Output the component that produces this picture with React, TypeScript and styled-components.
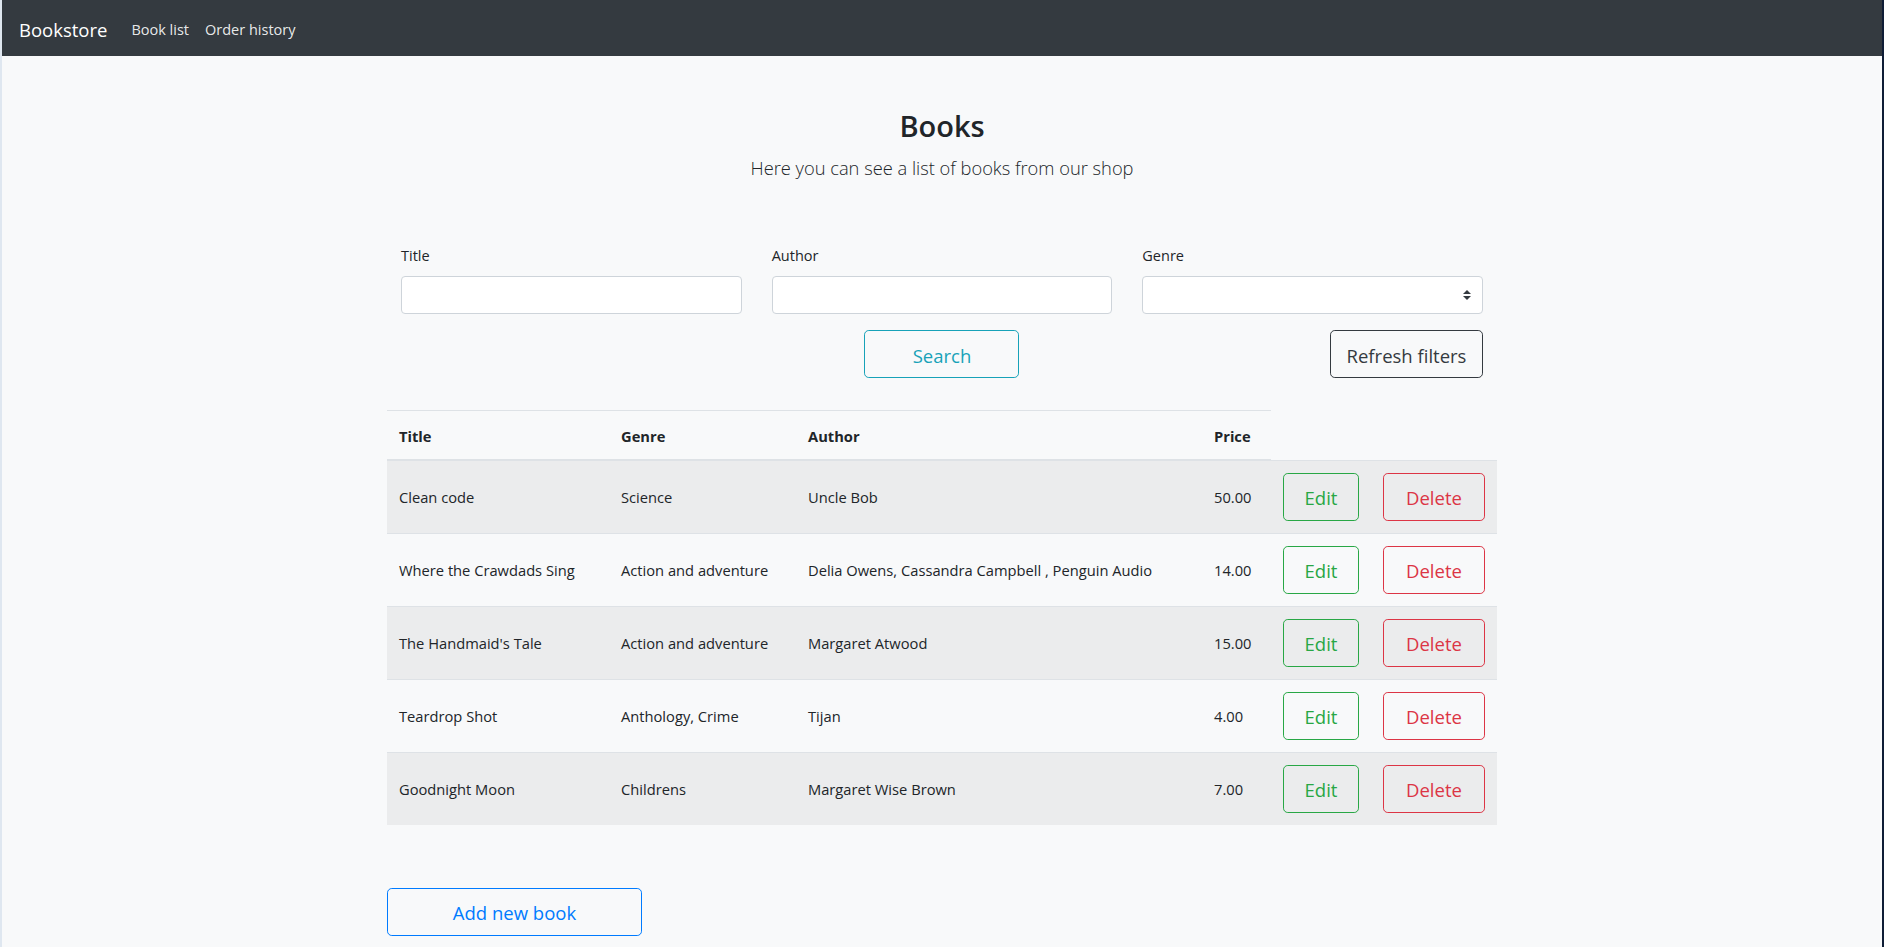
import React from 'react';
import styled, { createGlobalStyle } from 'styled-components';


const GlobalStyle = createGlobalStyle`
  html, body {
    margin: 0;
    padding: 0;
    background: #f8f9fa;
  }

  body {
    font-family: "Open Sans", "Noto Sans", sans-serif;
    color: #212529;
    -webkit-font-smoothing: antialiased;
  }

  * {
    box-sizing: border-box;
  }
`;

const Page = styled.div`
  min-height: 100vh;
  border-left: 2px solid #dfe7f0;
  border-right: 2px solid #0f1d36;
  background: #f8f9fa;
`;

const Navbar = styled.nav`
  display: flex;
  flex-direction: row;
  align-items: center;
  height: 56px;
  padding: 3px 17px 0;
  background: #343a40;
`;

const Brand = styled.a`
  margin-right: 16px;
  font-size: 18.5px;
  line-height: 30px;
  color: #fff;
  text-decoration: none;
`;

const NavLink = styled.a`
  padding: 0 8px;
  font-size: 14.5px;
  line-height: 24px;
  color: rgba(255, 255, 255, 0.9);
  text-decoration: none;
`;

const Container = styled.main`
  width: 1110px;
  margin: 0 auto;
  padding-bottom: 40px;
`;

const Intro = styled.header`
  padding-top: 51px;
  text-align: center;
`;

const Heading = styled.h2`
  margin: 0 0 8px;
  font-size: 29px;
  font-weight: 600;
  line-height: 38px;
`;

const Lead = styled.p`
  margin: 0;
  font-size: 18.3px;
  font-weight: 300;
  line-height: 30px;
`;

const Filters = styled.form`
  display: flex;
  flex-direction: column;
  gap: 16px;
  margin-top: 61px;
  padding: 0 14px;
`;

const FilterRow = styled.div`
  display: grid;
  grid-template-columns: repeat(3, 1fr);
  column-gap: 30px;
`;

const Field = styled.div`
  display: flex;
  flex-direction: column;
`;

const Label = styled.label`
  margin-bottom: 8px;
  font-size: 14.5px;
  line-height: 24px;
`;

const Input = styled.input`
  display: block;
  width: 100%;
  height: 38px;
  padding: 6px 12px;
  font: inherit;
  border: 1px solid #ced4da;
  border-radius: 4px;
  background: #fff;
  outline: none;
`;

const SelectWrap = styled.div`
  position: relative;
`;

const Select = styled.select`
  display: block;
  width: 100%;
  height: 38px;
  padding: 6px 28px 6px 12px;
  font: inherit;
  border: 1px solid #ced4da;
  border-radius: 4px;
  background: #fff;
  appearance: none;
  outline: none;
`;

const SelectArrow = styled.svg`
  position: absolute;
  top: 14px;
  right: 12px;
  width: 8px;
  height: 10px;
  pointer-events: none;
`;

const Button = styled.button<{ $tone: string; $width: number; $align?: string }>`
  justify-self: ${props => props.$align || 'start'};
  width: ${props => props.$width}px;
  height: 48px;
  padding: 3px 0 0;
  font-family: inherit;
  font-size: 18.5px;
  line-height: 30px;
  color: ${props => props.$tone};
  background: transparent;
  border: 1px solid ${props => props.$tone};
  border-radius: 4.8px;
  cursor: pointer;
`;

const Table = styled.table`
  width: 1110px;
  margin-top: 32px;
  border-collapse: collapse;
  table-layout: fixed;
  font-size: 14.7px;
  line-height: 24px;
`;

const Col = styled.col<{ $width: number }>`
  width: ${props => props.$width}px;
`;

const Th = styled.th`
  padding: 13px 12px 11px;
  text-align: left;
  font-weight: 700;
  vertical-align: bottom;
  border-top: 1px solid #dee2e6;
  border-bottom: 2px solid #dee2e6;
`;

const Row = styled.tr`
  &:nth-of-type(odd) {
    background: rgba(0, 0, 0, 0.05);
  }
`;

const Td = styled.td`
  padding: 12px;
  vertical-align: middle;
  border-top: 1px solid #dee2e6;
`;

const CellText = styled.span`
  display: inline-block;
  padding-top: 1px;
`;

const Footer = styled.div`
  margin-top: 63px;
`;


interface IBook {
  title: string;
  genre: string;
  author: string;
  price: string;
}

const books: IBook[] = [
  { title: 'Clean code', genre: 'Science', author: 'Uncle Bob', price: '50.00' },
  { title: 'Where the Crawdads Sing', genre: 'Action and adventure', author: 'Delia Owens, Cassandra Campbell , Penguin Audio', price: '14.00' },
  { title: "The Handmaid's Tale", genre: 'Action and adventure', author: 'Margaret Atwood', price: '15.00' },
  { title: 'Teardrop Shot', genre: 'Anthology, Crime', author: 'Tijan', price: '4.00' },
  { title: 'Goodnight Moon', genre: 'Childrens', author: 'Margaret Wise Brown', price: '7.00' },
];

const columns = [222, 187, 406, 69, 100, 126];


function App() {
  return (
    <Page>
      <GlobalStyle />
      <Navbar>
        <Brand href="#">Bookstore</Brand>
        <NavLink href="#">Book list</NavLink>
        <NavLink href="#">Order history</NavLink>
      </Navbar>
      <Container>
        <Intro>
          <Heading>Books</Heading>
          <Lead>Here you can see a list of books from our shop</Lead>
        </Intro>

        <Filters onSubmit={e => e.preventDefault()}>
          <FilterRow>
            <Field>
              <Label>Title</Label>
              <Input type="text" />
            </Field>
            <Field>
              <Label>Author</Label>
              <Input type="text" />
            </Field>
            <Field>
              <Label>Genre</Label>
              <SelectWrap>
                <Select defaultValue="">
                  <option value=""></option>
                </Select>
                <SelectArrow viewBox="0 0 4 5">
                  <path fill="#343a40" d="M2 0L0 2h4zm0 5L0 3h4z" />
                </SelectArrow>
              </SelectWrap>
            </Field>
          </FilterRow>
          <FilterRow>
            <span />
            <Button type="submit" $tone="#17a2b8" $width={155} $align="center">Search</Button>
            <Button type="button" $tone="#343a40" $width={153} $align="end">Refresh filters</Button>
          </FilterRow>
        </Filters>

        <Table>
          <colgroup>
            {columns.map((w, i) => <Col key={i} $width={w} />)}
          </colgroup>
          <thead>
            <tr>
              <Th>Title</Th>
              <Th>Genre</Th>
              <Th>Author</Th>
              <Th>Price</Th>
            </tr>
          </thead>
          <tbody>
            {books.map(book => (
              <Row key={book.title}>
                <Td><CellText>{ book.title }</CellText></Td>
                <Td><CellText>{ book.genre }</CellText></Td>
                <Td><CellText>{ book.author }</CellText></Td>
                <Td><CellText>{ book.price }</CellText></Td>
                <Td><Button $tone="#28a745" $width={76}>Edit</Button></Td>
                <Td><Button $tone="#dc3545" $width={102}>Delete</Button></Td>
              </Row>
            ))}
          </tbody>
        </Table>

        <Footer>
          <Button $tone="#007bff" $width={255}>Add new book</Button>
        </Footer>
      </Container>
    </Page>
  );
}

export default App;
